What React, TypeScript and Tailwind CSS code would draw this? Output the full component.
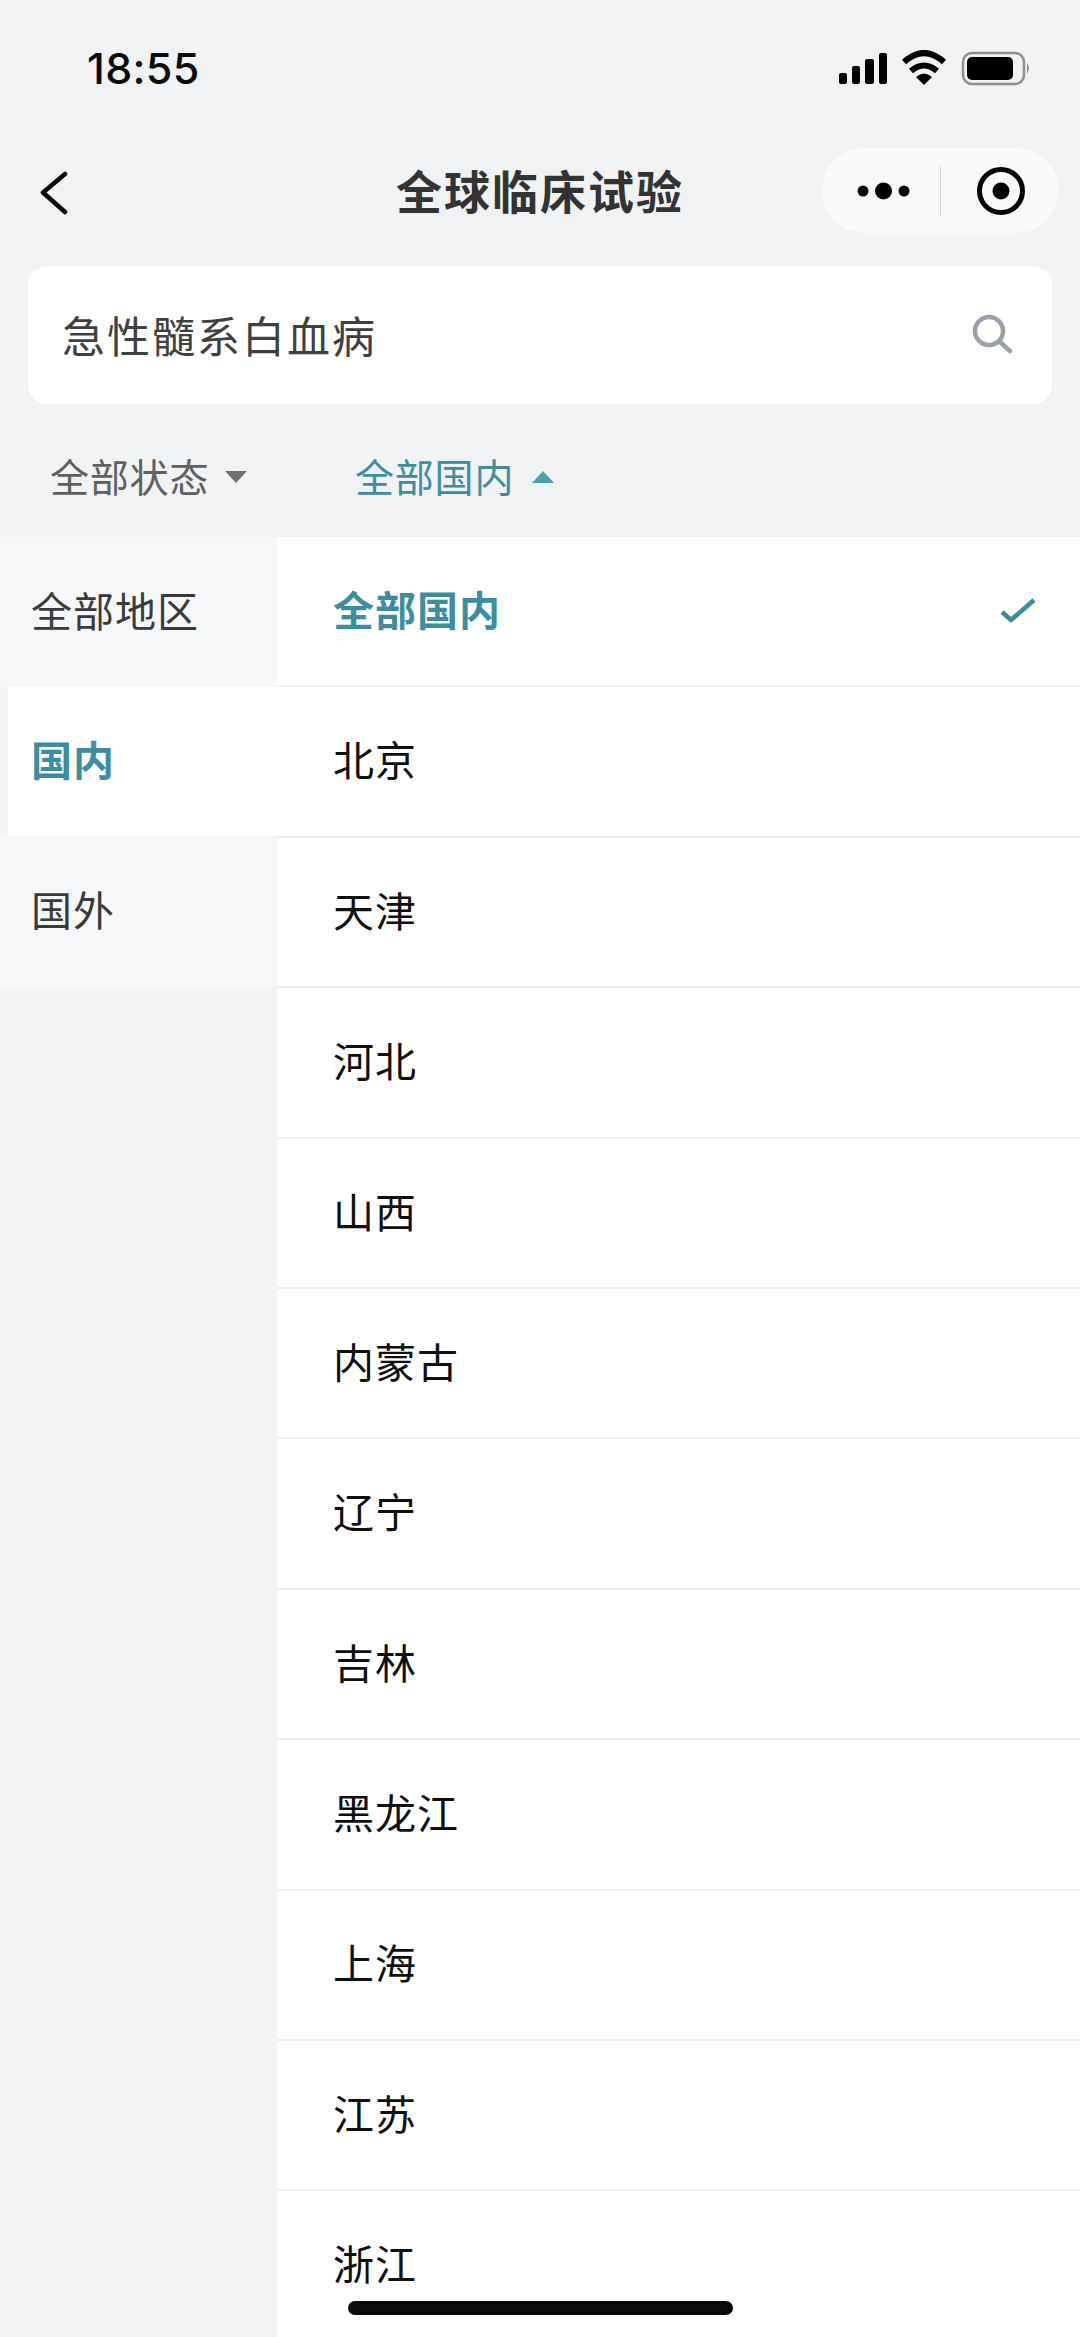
const REGIONS = ["全部地区", "国内", "国外"];
const CITIES = ["全部国内", "北京", "天津", "河北", "山西", "内蒙古", "辽宁", "吉林", "黑龙江", "上海", "江苏", "浙江"];

function StatusBar() {
  return (
    <div className="flex h-[138px] items-start justify-between pl-[87px] pr-[50px] pt-[43px]">
      <span className="font-['Inter',sans-serif] text-[43px] leading-[50px] font-medium tracking-[0.3px] text-[#0a0a0a]">18:55</span>
      <svg width="193" height="36" viewBox="0 0 193 36" className="mt-[7px] mr-[-2px]">
        <rect x="0" y="23" width="8" height="11" rx="2" fill="#000" />
        <rect x="13" y="16" width="8" height="18" rx="2" fill="#000" />
        <rect x="26" y="9" width="9" height="25" rx="2" fill="#000" />
        <rect x="40" y="3" width="8" height="31" rx="2" fill="#000" />
        <path d="M65 12 Q85 -6 105 12" fill="none" stroke="#000" strokeWidth="6" />
        <path d="M72 21 Q85 10 98 21" fill="none" stroke="#000" strokeWidth="6" />
        <path d="M77 27 Q85 20 93 27 L85 35 Z" fill="#000" />
        <rect x="124" y="3" width="61" height="31" rx="9" fill="none" stroke="#8f8f8f" strokeWidth="2.5" />
        <rect x="128" y="7" width="46" height="23" rx="5" fill="#000" />
        <path d="M188 13 Q192 18 188 24 Z" fill="#8f8f8f" />
      </svg>
    </div>
  );
}

function NavBar() {
  return (
    <div className="relative flex h-[128px] items-start justify-between pl-[40px] pr-[20px] pt-[9px]">
      <svg width="30" height="44" viewBox="0 0 30 44" className="mt-[24px]">
        <path d="M25 3 L3 21.5 L25 41" fill="none" stroke="#0a0a0a" strokeWidth="4.5" strokeLinecap="round" strokeLinejoin="round" />
      </svg>
      <div className="absolute left-0 right-0 top-[21px] text-center text-[46px] leading-[60px] font-bold tracking-[2px] text-[#333333]">
        全球临床试验
      </div>
      <div className="flex h-[87px] w-[239px] items-center rounded-full border border-[#f0f2f2] bg-[#f8faf9]">
        <svg width="118" height="87" viewBox="0 0 118 87">
          <circle cx="41" cy="44" r="5.5" fill="#000" />
          <circle cx="61.5" cy="44" r="8.5" fill="#000" />
          <circle cx="82" cy="44" r="5.5" fill="#000" />
        </svg>
        <div className="h-[52px] w-[1px] bg-[#d9dbdb]" />
        <svg width="118" height="87" viewBox="0 0 118 87">
          <circle cx="60" cy="44" r="21.5" fill="none" stroke="#000" strokeWidth="5" />
          <circle cx="60" cy="44" r="8.5" fill="#000" />
        </svg>
      </div>
    </div>
  );
}

function SearchBox() {
  return (
    <div className="mx-[28px] flex h-[138px] items-center justify-between rounded-[20px] bg-white pl-[34px] pr-[37px]">
      <span className="pb-[3px] text-[43px] leading-[56px] tracking-[2px] text-[#3f3f3f]">急性髓系白血病</span>
      <svg width="44" height="44" viewBox="0 0 44 44">
        <circle cx="18" cy="18" r="14" fill="none" stroke="#9ca0ac" strokeWidth="4.5" />
        <path d="M29 29 L39 38" fill="none" stroke="#9ca0ac" strokeWidth="4.5" strokeLinecap="round" />
      </svg>
    </div>
  );
}

function Filters() {
  return (
    <div className="flex h-[133px] items-start pl-[50px] pt-[45px] text-[39px] leading-[52px]">
      <div className="flex w-[305px] items-center text-[#5f5f5f]">
        <span className="tracking-[0.8px]">全部状态</span>
        <svg width="22" height="12" viewBox="0 0 22 12" className="ml-[16px] mt-[3px]">
          <path d="M0 0 H22 L11 12 Z" fill="#707070" />
        </svg>
      </div>
      <div className="flex items-center text-[#3d8d9e]">
        <span className="tracking-[0.8px]">全部国内</span>
        <svg width="22" height="12" viewBox="0 0 22 12" className="ml-[18px] mt-[3px]">
          <path d="M0 12 H22 L11 0 Z" fill="#4f9eac" />
        </svg>
      </div>
    </div>
  );
}

export default function App() {
  return (
    <div className="relative h-[2337px] w-[1080px] overflow-hidden bg-[#f0f2f4] font-['Noto_Sans_CJK_SC',sans-serif]">
      <StatusBar />
      <NavBar />
      <SearchBox />
      <Filters />

      <div className="flex h-[1800px]">
        {/* Region column */}
        <div className="w-[277px] shrink-0 bg-[#f4f4f5]">
          {REGIONS.map((r) => (
            <div
              key={r}
              className={`flex h-[149.5px] items-center pb-[5px] text-[41px] tracking-[1px] ${
                r === "国内"
                  ? "ml-[8px] bg-white pl-[23px] font-bold text-[#3d8d9e]"
                  : "bg-[#f6f7f9] pl-[31px] text-[#3a3a3a]"
              }`}
            >
              {r}
            </div>
          ))}
        </div>

        {/* City list */}
        <div className="flex-1 bg-white">
          {CITIES.map((c, i) => (
            <div
              key={c}
              className="flex h-[150.4px] items-center justify-between border-b-2 border-[#f0f0f0] pl-[56px] pr-[44px]"
            >
              <span
                className={`pb-[5px] text-[41px] tracking-[1px] ${
                  i === 0 ? "font-bold text-[#3d8d9e]" : "text-[#0f0f0f]"
                }`}
              >
                {c}
              </span>
              {i === 0 && (
                <svg width="36" height="26" viewBox="0 0 36 26">
                  <path d="M2 14 L11 22 L34 2" fill="none" stroke="#3a8c9c" strokeWidth="4.5" strokeLinejoin="round" />
                </svg>
              )}
            </div>
          ))}
        </div>
      </div>

      {/* home indicator */}
      <div className="absolute left-[348px] top-[2301px] h-[14px] w-[385px] rounded-full bg-[#0a0a0a]" />
    </div>
  );
}
